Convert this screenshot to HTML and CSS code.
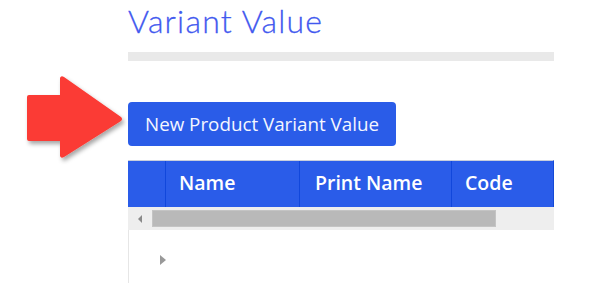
FILE: index.html
```html
<!DOCTYPE html>
<html lang="en">
<head>
  <meta charset="UTF-8">
  <title>Variant Value</title>
  <link rel="stylesheet" href="styles.css">
</head>
<body>

  <div class="page">
    <h1>Variant Value</h1>
    <div class="divider"></div>

    <button class="btn-new">New Product Variant Value</button>

    <div class="grid">
      <div class="grid-head">
        <div class="col col-expand"></div>
        <div class="col col-name">Name</div>
        <div class="col col-print">Print Name</div>
        <div class="col col-code">Code</div>
      </div>
      <div class="scrollbar">
        <span class="scroll-left"></span>
        <span class="scroll-thumb"></span>
      </div>
      <div class="grid-body">
        <span class="row-toggle"></span>
      </div>
    </div>
  </div>

  <svg class="pointer" width="110" height="100" viewBox="0 0 110 100">
    <defs>
      <filter id="shadow" x="-20%" y="-20%" width="140%" height="140%">
        <feDropShadow dx="2" dy="3" stdDeviation="2" flood-color="#000" flood-opacity="0.35"/>
      </filter>
    </defs>
    <path d="M9 22 L40 22 L40 5 Q41 2 44 4 L101 44 Q103 46 101 48 L44 84 Q41 86 40 83 L40 68 L9 68 Q7 68 7 66 L7 24 Q7 22 9 22 Z"
          fill="#fb3a34" filter="url(#shadow)"/>
  </svg>

</body>
</html>
```

FILE: styles.css
```css
body {
  margin: 0;
  background: #fff;
  font-family: 'Open Sans', sans-serif;
  position: relative;
}

.page {
  width: 426px;
  margin-left: 128px;
  padding-top: 1px;
}

h1 {
  margin: 0;
  font-family: 'Lato', sans-serif;
  font-weight: 300;
  font-size: 32px;
  line-height: 40px;
  color: #4259ef;
  letter-spacing: 1.2px;
  -webkit-text-stroke: 0.3px #4259ef;
}

.divider {
  height: 9px;
  background: #e9e9e9;
  margin-top: 11px;
}

.btn-new {
  display: block;
  margin-top: 41px;
  width: 268px;
  height: 44px;
  padding: 0;
  border: none;
  border-radius: 4px;
  background: #2a5ce8;
  color: #f4f6ff;
  font-family: 'Open Sans', sans-serif;
  font-size: 18.8px;
  cursor: pointer;
}

.grid {
  margin-top: 14px;
}

.grid-head {
  display: flex;
  height: 46px;
  background: #2a5ce9;
  border-top: 1px solid #c9cfdc;
  border-right: 1px solid #1449d6;
  color: #fff;
  font-weight: 600;
  font-size: 19.5px;
}

.col {
  display: flex;
  align-items: center;
  border-right: 1px solid #1147dc;
  box-sizing: border-box;
  padding-left: 13px;
  padding-bottom: 3px;
}

.col-expand { width: 38px; }
.col-name { width: 134px; }
.col-print { width: 152px; padding-left: 15px; }
.col-code { flex: 1; border-right: none; padding-left: 13px; }

.scrollbar {
  display: flex;
  align-items: center;
  height: 23px;
  background: #eeeeee;
}

.scroll-left {
  width: 0;
  height: 0;
  margin-left: 10px;
  border-top: 4px solid transparent;
  border-bottom: 4px solid transparent;
  border-right: 4px solid #8a8a8a;
}

.scroll-thumb {
  width: 344px;
  height: 17px;
  margin-left: 10px;
  background: #b9b9b9;
  border: 1px solid #c4c4c4;
  box-sizing: border-box;
}

.grid-body {
  height: 60px;
  border-left: 1px solid #e6e6e6;
  padding: 25px 0 0 31px;
  box-sizing: border-box;
}

.row-toggle {
  display: block;
  width: 0;
  height: 0;
  border-top: 5px solid transparent;
  border-bottom: 5px solid transparent;
  border-left: 6px solid #999;
}

.pointer {
  position: absolute;
  left: 20px;
  top: 73px;
}
```
